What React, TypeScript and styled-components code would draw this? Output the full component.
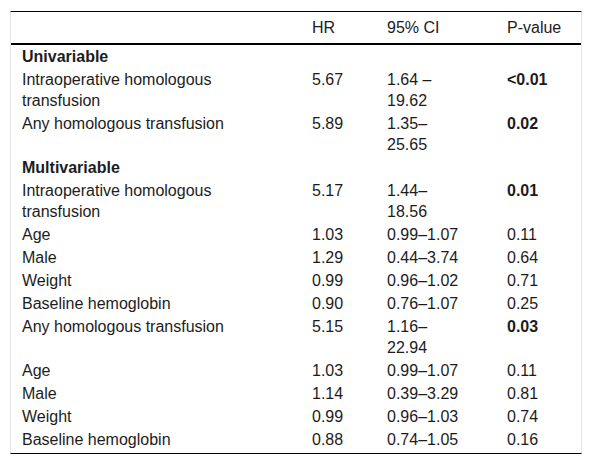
import React from "react";
import styled, { createGlobalStyle } from "styled-components";

type Row = {
  label: string;
  hr?: string;
  ci?: string;
  p?: string;
  section?: boolean;
  strong?: boolean;
};

const rows: Row[] = [
  { label: "Univariable", section: true },
  { label: "Intraoperative homologous transfusion", hr: "5.67", ci: "1.64 – 19.62", p: "<0.01", strong: true },
  { label: "Any homologous transfusion", hr: "5.89", ci: "1.35–25.65", p: "0.02", strong: true },
  { label: "Multivariable", section: true },
  { label: "Intraoperative homologous transfusion", hr: "5.17", ci: "1.44–18.56", p: "0.01", strong: true },
  { label: "Age", hr: "1.03", ci: "0.99–1.07", p: "0.11" },
  { label: "Male", hr: "1.29", ci: "0.44–3.74", p: "0.64" },
  { label: "Weight", hr: "0.99", ci: "0.96–1.02", p: "0.71" },
  { label: "Baseline hemoglobin", hr: "0.90", ci: "0.76–1.07", p: "0.25" },
  { label: "Any homologous transfusion", hr: "5.15", ci: "1.16–22.94", p: "0.03", strong: true },
  { label: "Age", hr: "1.03", ci: "0.99–1.07", p: "0.11" },
  { label: "Male", hr: "1.14", ci: "0.39–3.29", p: "0.81" },
  { label: "Weight", hr: "0.99", ci: "0.96–1.03", p: "0.74" },
  { label: "Baseline hemoglobin", hr: "0.88", ci: "0.74–1.05", p: "0.16" },
];

function App() {
  return (
    <>
      <GlobalStyle />
      <Page>
        <Frame>
          <Table>
            <colgroup>
              <col style={{ width: 291 }} />
              <col style={{ width: 75 }} />
              <col style={{ width: 120 }} />
              <col style={{ width: 84 }} />
            </colgroup>
            <thead>
              <tr>
                <Th first></Th>
                <Th>HR</Th>
                <Th>95% CI</Th>
                <Th>P-value</Th>
              </tr>
            </thead>
            <tbody>
              {rows.map((row, index) => {
                return (
                  <tr key={index}>
                    <Td first bold={row.section}>
                      <Label>{row.label}</Label>
                    </Td>
                    <Td>{row.hr}</Td>
                    <Td>
                      <Range>{row.ci}</Range>
                    </Td>
                    <Td bold={row.strong}>{row.p}</Td>
                  </tr>
                );
              })}
            </tbody>
          </Table>
        </Frame>
      </Page>
    </>
  );
}

export default App;

const GlobalStyle = createGlobalStyle`
  html, body {
    margin: 0;
    padding: 0;
    background: #fff;
  }
  body {
    font-family: "Liberation Sans", Arial, sans-serif;
    color: #1c1c1c;
  }
`;

const Page = styled.div`
  padding: 11px 10px 0 10px;
  width: 572px;
`;

const Frame = styled.div`
  border-top: 1px solid #000;
  border-bottom: 1px solid #000;
  border-left: 1px solid #e6e6e6;
  border-right: 1px solid #e6e6e6;
  padding-bottom: 2px;
`;

const Table = styled.table`
  width: 570px;
  table-layout: fixed;
  border-collapse: collapse;
  font-size: 16px;
  line-height: 21px;

  thead tr {
    border-bottom: 2px solid #000;
  }
`;

const Th = styled.th<{ first?: boolean }>`
  text-align: left;
  font-weight: 400;
  vertical-align: top;
  padding: 5px 0 5px ${(p) => (p.first ? "11px" : "10px")};
`;

const Td = styled.td<{ first?: boolean; bold?: boolean }>`
  vertical-align: top;
  padding: 1px 0 1px ${(p) => (p.first ? "11px" : "10px")};
  font-weight: ${(p) => (p.bold ? 700 : 400)};
`;

const Label = styled.div`
  max-width: 240px;
`;

const Range = styled.div`
  max-width: 76px;
`;
